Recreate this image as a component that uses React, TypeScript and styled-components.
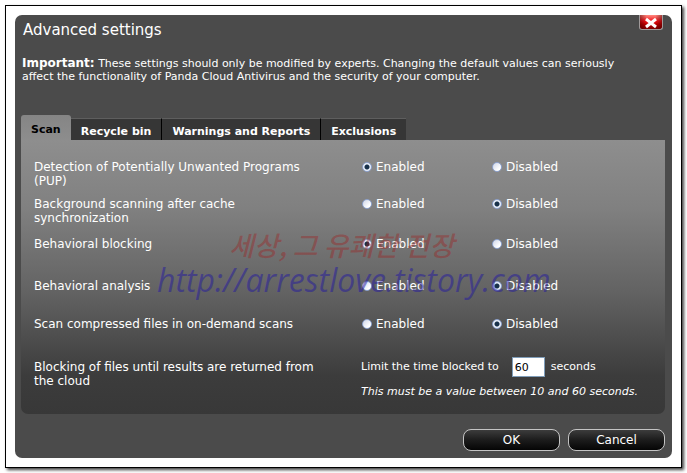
import React, { useState } from "react";
import styled, { createGlobalStyle } from "styled-components";

const GlobalStyle = createGlobalStyle`
  *, *::before, *::after { box-sizing: border-box; }
  body {
    margin: 0;
    padding: 5px;
    background: #fff;
    color: #fff;
    font-family: "DejaVu Sans", Verdana, sans-serif;
  }
  button, input { font-family: inherit; }
`;

const Frame = styled.main`
  border: 1px solid #000;
  padding: 9px;
  background: #fff;
  box-shadow: 2px 2px 3px rgba(0, 0, 0, 0.75);
`;

const Dialog = styled.section`
  position: relative;
  display: flex;
  flex-direction: column;
  padding: 6px 7px 7px 6px;
  border-radius: 7px;
  background: #4b4b4b;
`;

const Title = styled.h1`
  margin: 0 2px;
  font: 400 15px/18px "DejaVu Sans", sans-serif;
`;

const CloseButton = styled.button`
  position: absolute;
  top: 0;
  right: 9px;
  width: 24px;
  height: 15px;
  padding: 0;
  border: 1px solid #a09a9a;
  border-top: 0;
  border-radius: 0 0 3px 3px;
  background: linear-gradient(to right, rgba(70, 0, 0, 0.5), transparent 30%, transparent 70%, rgba(70, 0, 0, 0.5)),
    linear-gradient(#ff8a80, #f01018 45%, #c00000 65%, #780000);
  svg { display: block; margin: 0 auto; }
`;

const Notice = styled.p`
  margin: 18px 20px 32px 1px;
  font: 400 11px/13px "DejaVu Sans", sans-serif;
  strong { font-size: 12px; }
`;

const Tabs = styled.div`
  display: flex;
  align-items: flex-end;
`;

const Tab = styled.button<{ $active: boolean }>`
  height: ${(p) => (p.$active ? 25 : 22)}px;
  padding: ${(p) => (p.$active ? "4px 10px 0" : "4px 10px 0")};
  border: 0;
  border-top: ${(p) => (p.$active ? "0" : "1px solid #5e5e5e")};
  border-left: ${(p) => (p.$active ? "0" : "1px solid #000")};
  border-radius: ${(p) => (p.$active ? "3px 3px 0 0" : "0")};
  background: ${(p) => (p.$active ? "linear-gradient(#858585, #8d8d8d)" : "#363636")};
  color: ${(p) => (p.$active ? "#000" : "#fff")};
  font-size: 11px;
  line-height: 14px;
  font-weight: 700;
  white-space: nowrap;
  &:nth-child(2) { border-left: 0; }
`;

const Panel = styled.div`
  position: relative;
  display: grid;
  grid-template-rows: 37px 40px 42px 38px 43px auto;
  padding: 20px 10px 15px 13px;
  border-radius: 0 0 7px 7px;
  background: linear-gradient(#8e8e8e, #808080 25%, #626262 56%, #3c3c3c 86%, #383838);
`;

const Row = styled.div`
  display: grid;
  grid-template-columns: 327px 130px 1fr;
  align-items: start;
`;

const Label = styled.span`
  padding-right: 28px;
  font-size: 12px;
  line-height: 14px;
`;

const Choice = styled.label`
  display: flex;
  align-items: center;
  gap: 4px;
  padding-left: 1px;
  font-size: 12px;
  line-height: 14px;
`;

const Radio = styled.input`
  appearance: none;
  width: 10px;
  height: 10px;
  margin: 0;
  border: 1px solid #8ea3cf;
  border-radius: 50%;
  background: linear-gradient(135deg, #cfd6e8, #fff 75%);
  &:checked {
    background: radial-gradient(circle, #17304a 0 2px, #eaf0fa 3px);
  }
`;

const LimitRow = styled(Row)`
  grid-template-columns: 327px 1fr;
`;

const Limit = styled.div`
  display: flex;
  flex-direction: column;
  gap: 8px;
  margin-top: -3px;
  font-size: 11px;
  line-height: 14px;
  white-space: nowrap;
`;

const LimitLine = styled.label`
  display: flex;
  align-items: center;
`;

const SecondsInput = styled.input`
  width: 33px;
  height: 20px;
  margin: 0 6px 0 13px;
  padding: 0 2px;
  border: 1px solid #7f9db9;
  background: #fff;
  color: #000;
  font-size: 11px;
`;

const Hint = styled.em`
  font-size: 11px;
`;

const Watermark = styled.div`
  position: absolute;
  top: 87px;
  left: 136px;
  pointer-events: none;
  white-space: nowrap;
`;

const WatermarkTitle = styled.div`
  padding-left: 72px;
  color: rgba(160, 30, 30, 0.4);
  font: italic 500 27px/36px "Noto Sans CJK KR", sans-serif;
`;

const WatermarkAddress = styled.div`
  color: rgba(35, 25, 160, 0.5);
  font: italic 400 32px/34px "Open Sans", sans-serif;
`;

const Footer = styled.footer`
  display: flex;
  justify-content: flex-end;
  gap: 8px;
  margin-top: 15px;
`;

const ActionButton = styled.button`
  width: 97px;
  height: 22px;
  padding: 0;
  border: 1px solid #c4c4c4;
  border-radius: 8px;
  background: linear-gradient(#3c3c3c, #1c1c1c 50%, #050505);
  color: #fff;
  font-size: 12px;
  line-height: 16px;
`;

const tabs = ["Scan", "Recycle bin", "Warnings and Reports", "Exclusions"];

const options = [
  { id: "pup", label: "Detection of Potentially Unwanted Programs (PUP)", enabled: true },
  { id: "background", label: "Background scanning after cache synchronization", enabled: false },
  { id: "blocking", label: "Behavioral blocking", enabled: true },
  { id: "analysis", label: "Behavioral analysis", enabled: false },
  { id: "compressed", label: "Scan compressed files in on-demand scans", enabled: false },
];

function Option({ id, label, enabled }: { id: string; label: string; enabled: boolean }) {
  return (
    <Row role="radiogroup" aria-labelledby={`${id}-label`}>
      <Label id={`${id}-label`}>{label}</Label>
      <Choice>
        <Radio type="radio" name={id} defaultChecked={enabled} />
        Enabled
      </Choice>
      <Choice>
        <Radio type="radio" name={id} defaultChecked={!enabled} />
        Disabled
      </Choice>
    </Row>
  );
}

export default function App() {
  const [active, setActive] = useState("Scan");
  return (
    <>
      <GlobalStyle />
      <Frame>
        <Dialog role="dialog" aria-labelledby="dialog-title">
          <Title id="dialog-title">Advanced settings</Title>
          <CloseButton aria-label="Close">
            <svg width="14" height="13" viewBox="0 0 14 13">
              <path d="M2 3 L12 11 M12 3 L2 11" stroke="#fff" strokeWidth="3" />
            </svg>
          </CloseButton>
          <Notice>
            <strong>Important:</strong> These settings should only be modified by experts. Changing the default
            values can seriously affect the functionality of Panda Cloud Antivirus and the security of your computer.
          </Notice>
          <Tabs role="tablist">
            {tabs.map((t) => (
              <Tab key={t} role="tab" aria-selected={t === active} $active={t === active} onClick={() => setActive(t)}>
                {t}
              </Tab>
            ))}
          </Tabs>
          <Panel role="tabpanel">
            {options.map((o) => (
              <Option key={o.id} {...o} />
            ))}
            <LimitRow>
              <Label>Blocking of files until results are returned from the cloud</Label>
              <Limit>
                <LimitLine>
                  Limit the time blocked to
                  <SecondsInput type="text" defaultValue="60" />
                  seconds
                </LimitLine>
                <Hint>This must be a value between 10 and 60 seconds.</Hint>
              </Limit>
            </LimitRow>
            <Watermark>
              <WatermarkTitle>세상, 그 유쾌한 전장</WatermarkTitle>
              <WatermarkAddress>http://arrestlove.tistory.com</WatermarkAddress>
            </Watermark>
          </Panel>
          <Footer>
            <ActionButton>OK</ActionButton>
            <ActionButton>Cancel</ActionButton>
          </Footer>
        </Dialog>
      </Frame>
    </>
  );
}
